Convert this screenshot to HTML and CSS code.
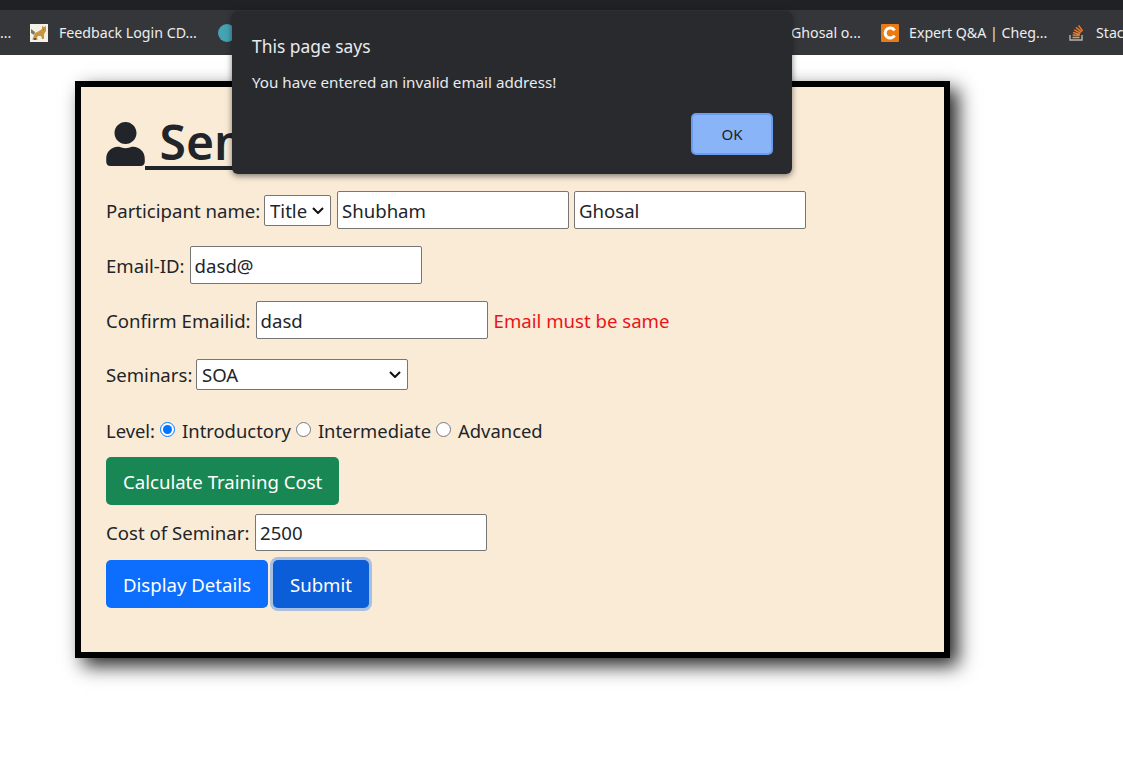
FILE: index.html
```html
<!DOCTYPE html>
<html lang="en">
<head>
    <meta charset="UTF-8">
    <meta name="viewport" content="width=device-width, initial-scale=1.0">
    <title>Seminar Registration</title>
    <link rel="stylesheet" href="styles.css">
</head>
<body>

<div class="tabstrip"></div>

<nav class="bookmarks">
    <span class="mark mark-first">...</span>
    <span class="mark mark-feedback">
        <svg class="fav" viewBox="0 0 18 18">
            <rect width="18" height="18" fill="#f4f1e6"/>
            <path d="M3 14l2-5 4-2 3-2 0-3 2 1 2-1 0 5-2 3 0 5-2 0-1-3-3 0-2 3z" fill="#c9963f"/>
            <path d="M1 5l4 3-1 3-3-2z" fill="#77776a"/>
            <path d="M2 15l3 1 3-1-3-1zM13 5l1 0 0 1z" fill="#5b3d1a"/>
        </svg>
        Feedback Login CD...
    </span>
    <span class="mark mark-teal"><i class="teal-dot"></i></span>
    <span class="mark mark-ghosal">Ghosal o...</span>
    <span class="mark mark-chegg">
        <svg class="fav" viewBox="0 0 18 18">
            <rect width="18" height="18" rx="1" fill="#e87b13"/>
            <path d="M13.500 6.500A5 5 0 1 0 13.500 11.500" fill="none" stroke="#fff" stroke-width="3"/>
        </svg>
        Expert Q&amp;A | Cheg...
    </span>
    <span class="mark mark-stack">
        <svg class="fav" viewBox="0 0 18 18">
            <path d="M2 11v5h12v-5" fill="none" stroke="#b9b3a8" stroke-width="1.4"/>
            <path d="M4.500 13.500h7" stroke="#e2a04a" stroke-width="1.5"/>
            <path d="M4.600 11l7 .6M5 8.600l7 1.800M6.200 5.800l6.400 3.400M8 3.400l5.600 4.600M10.600 1.400l4 5.600" stroke="#e8792b" stroke-width="1.5" fill="none"/>
        </svg>
        Stack Overflow
    </span>
</nav>

<main class="panel">
    <h1 class="panel-title">
        <svg class="user-icon" viewBox="0 0 448 512">
            <path d="M224 256c70.700 0 128-57.300 128-128S294.700 0 224 0 96 57.300 96 128s57.300 128 128 128zm89.600 32h-16.700c-22.200 10.200-46.900 16-72.900 16s-50.600-5.800-72.900-16h-16.700C60.200 288 0 348.200 0 422.400V464c0 26.500 21.500 48 48 48h352c26.500 0 48-21.500 48-48v-41.600c0-74.200-60.200-134.400-134.400-134.400z" fill="#212529"/>
        </svg>
        Seminar Registration
    </h1>
    <form>
        <div class="row row-name">
            <label>Participant name:</label>
            <select class="select-title"><option>Title</option></select>
            <input class="field" type="text" value="Shubham">
            <input class="field" type="text" value="Ghosal">
        </div>
        <div class="row row-email">
            <label>Email-ID:</label>
            <input class="field" type="text" value="dasd@">
        </div>
        <div class="row row-confirm">
            <label>Confirm Emailid:</label>
            <input class="field" type="text" value="dasd">
            <span class="error">Email must be same</span>
        </div>
        <div class="row row-seminar">
            <label>Seminars:</label>
            <select class="select-seminar"><option>SOA</option></select>
        </div>
        <div class="row row-level">
            <label>Level:</label>
            <input class="radio" type="radio" name="level" checked>
            <label>Introductory</label>
            <input class="radio" type="radio" name="level">
            <label>Intermediate</label>
            <input class="radio" type="radio" name="level">
            <label>Advanced</label>
        </div>
        <button class="btn btn-green" type="button">Calculate Training Cost</button>
        <div class="row row-cost">
            <label>Cost of Seminar:</label>
            <input class="field" type="text" value="2500">
        </div>
        <div class="row row-buttons">
            <button class="btn btn-blue" type="button">Display Details</button>
            <button class="btn btn-blue btn-focus" type="button">Submit</button>
        </div>
    </form>
</main>

<div class="alert">
    <div class="alert-title">This page says</div>
    <div class="alert-text">You have entered an invalid email address!</div>
    <div class="alert-actions"><button class="alert-ok" type="button">OK</button></div>
</div>

</body>
</html>
```

FILE: styles.css
```css
body {
    font-family: "Noto Sans", "Open Sans", Arial, sans-serif;
    font-size: 18.6px;
    color: #212529;
    margin: 0;
    min-height: 781px;
    background-color: white;
}
.tabstrip {
    height: 10px;
    background-color: #202124;
}
.bookmarks {
    height: 45px;
    background-color: #35363a;
    color: #eceded;
    font-size: 14.2px;
    display: flex;
    align-items: center;
    overflow: hidden;
    white-space: nowrap;
}
.mark {
    display: flex;
    align-items: center;
    gap: 11px;
    flex-shrink: 0;
}
.mark-first {
    width: 30px;
}
.mark-feedback {
    width: 188px;
}
.mark-teal {
    width: 573px;
}
.mark-ghosal {
    width: 90px;
}
.mark-chegg {
    width: 187px;
    gap: 10px;
}
.mark-stack {
    gap: 10px;
}
.teal-dot {
    width: 18px;
    height: 18px;
    border-radius: 50%;
    background-color: #46a3b4;
}
.fav {
    width: 18px;
    height: 18px;
}
.panel {
    box-sizing: border-box;
    width: 875px;
    height: 577px;
    margin: 26px 0 0 75px;
    padding: 26px 25px;
    border: 6px solid black;
    background-color: #faebd7;
    box-shadow: 8px 8px 18px rgba(0, 0, 0, 0.85);
}
.panel-title {
    margin: 0 0 20px;
    font-size: 48px;
    font-weight: 600;
    line-height: 58px;
    word-spacing: 2px;
    text-decoration: underline;
    text-decoration-thickness: 4px;
    text-underline-offset: 6px;
}
.user-icon {
    width: 39px;
    height: 44px;
    vertical-align: -6px;
}
.row {
    display: flex;
    align-items: center;
    gap: 5px;
    white-space: nowrap;
}
.row-name {
    margin-bottom: 17px;
}
.row-name label {
    width: 153px;
}
.row-email {
    margin-bottom: 17px;
}
.row-confirm {
    margin-bottom: 20px;
}
.row-seminar {
    margin-bottom: 28px;
}
.row-seminar label {
    width: 85px;
}
.row-level {
    margin-bottom: 14px;
    font-size: 18.4px;
}
.row-cost {
    margin: 9px 0;
}
.row-cost label {
    width: 144px;
}
.field {
    box-sizing: border-box;
    width: 232px;
    height: 38px;
    padding: 1px 4px;
    border: 1px solid #767676;
    border-radius: 2px;
    font: inherit;
    color: #212529;
}
.row-cost .field {
    height: 37px;
}
.select-title, .select-seminar {
    appearance: none;
    height: 31px;
    padding: 0 0 0 5px;
    font: inherit;
    color: #212529;
    background-color: white;
    background-image: url("data:image/svg+xml,%3Csvg xmlns='http://www.w3.org/2000/svg' viewBox='0 0 12 7'%3E%3Cpath d='M1 1l5 5 5-5' fill='none' stroke='%23111' stroke-width='2'/%3E%3C/svg%3E");
    background-repeat: no-repeat;
    background-position: right 6px center;
    background-size: 12px 7px;
    border: 1px solid #767676;
    border-radius: 2px;
}
.select-title {
    width: 67px;
    margin-right: 1px;
}
.select-seminar {
    width: 212px;
}
.error {
    margin-left: 1px;
    color: #e8141a;
}
.radio {
    width: 15px;
    height: 15px;
    margin: 0 2px 2px 0;
    accent-color: #0075ff;
}
.btn {
    height: 48px;
    padding: 0 16px;
    border: 1px solid transparent;
    border-radius: 5px;
    font: inherit;
    color: white;
}
.btn-green {
    background-color: #198754;
}
.btn-blue {
    background-color: #0d6efd;
}
.btn-focus {
    background-color: #0b5ed7;
    box-shadow: 0 0 0 3px #a9bfe0;
}
.alert {
    position: absolute;
    left: 232px;
    top: 11px;
    box-sizing: border-box;
    width: 560px;
    height: 163px;
    padding: 23px 19px 18px 20px;
    background-color: #292a2d;
    border-radius: 6px;
    box-shadow: 0 2px 6px rgba(0, 0, 0, 0.5);
    color: #e8eaed;
}
.alert-title {
    font-size: 17.4px;
    line-height: 24px;
}
.alert-text {
    margin-top: 12px;
    font-size: 15.2px;
    line-height: 24px;
}
.alert-actions {
    display: flex;
    justify-content: flex-end;
    margin-top: 19px;
}
.alert-ok {
    width: 82px;
    height: 42px;
    border: 2px solid #6a9cf0;
    border-radius: 5px;
    background-color: #8ab4f8;
    color: #202124;
    font: inherit;
    font-size: 15px;
}
```
